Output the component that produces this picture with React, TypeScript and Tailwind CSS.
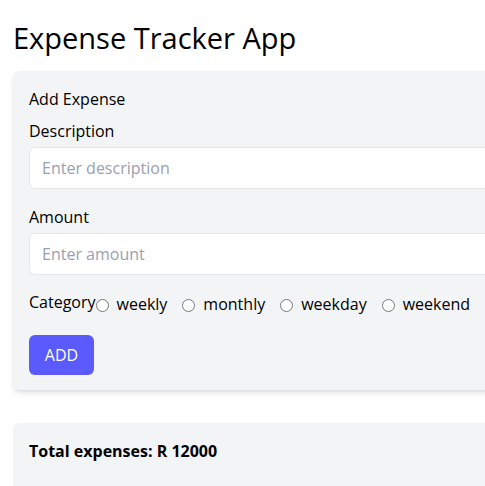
import React from "react";

const options = ["weekly", "monthly", "weekday", "weekend", "other"];

export default function App() {
  return (
    <div
      className="min-h-[486px] bg-white text-black p-[13px] pt-[16px]"
      style={{ fontFamily: '"Open Sans", sans-serif' }}
    >
      <h1 className="text-[29px] leading-[44px] mb-[11px]">Expense Tracker App</h1>
      <div className="w-[640px] bg-gray-100 rounded-md shadow-md px-4 pt-4 pb-[15px]">
        <div className="text-base leading-6 mb-2">Add Expense</div>
        <label className="block text-base leading-6 mb-[4px]">Description</label>
        <input
          className="w-full h-[42px] bg-white rounded-md border border-gray-200 px-3 text-base placeholder:text-gray-400 outline-none"
          placeholder="Enter description"
        />
        <label className="block text-base leading-6 mt-[16px] mb-[4px]">Amount</label>
        <input
          className="w-full h-[42px] bg-white rounded-md border border-gray-200 px-3 text-base placeholder:text-gray-400 outline-none"
          placeholder="Enter amount"
        />
        <div className="flex items-center mt-[17px] text-base leading-6 whitespace-nowrap">
          <span className="-mt-[4px]">Category</span>
          {options.map((o) => (
            <label key={o} className="flex items-center mr-[15px]">
              <input type="radio" name="cat" className="w-[13px] h-[13px] mt-[3px] mr-[8px] ml-[0px]" />
              <span>{o}</span>
            </label>
          ))}
        </div>
        <button className="mt-[19px] w-[65px] h-[40px] rounded-md bg-[#5a5aff] text-white text-base">
          ADD
        </button>
      </div>
      <div className="w-[640px] bg-gray-100 rounded-md mt-[33px] px-4 pt-4 pb-10">
        <div className="font-bold text-base leading-6">Total expenses: R 12000</div>
      </div>
    </div>
  );
}
